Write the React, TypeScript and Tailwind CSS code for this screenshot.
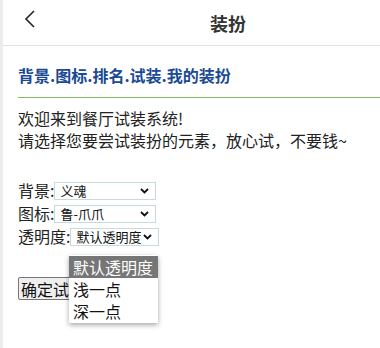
import React from "react";

const font = { fontFamily: '"Noto Sans CJK SC", "Noto Sans", sans-serif' };

function Sel({ value, width }: { value: string; width: string }) {
  return (
    <div className={`relative inline-flex items-center h-[18px] ${width} border border-[#c6dcdc] bg-white align-middle`}>
      <span className="pl-[5px] text-[13px] leading-[16px] text-[#111]">{value}</span>
      <svg className="absolute right-[6px] top-[5px]" width="9" height="6" viewBox="0 0 9 6">
        <path d="M1 1 L4.5 4.5 L8 1" stroke="#111" strokeWidth="1.8" fill="none" />
      </svg>
    </div>
  );
}

export default function App() {
  return (
    <div className="w-[380px] h-[348px] bg-white flex overflow-hidden" style={font}>
      <div className="w-[3px] bg-[#ececec] shrink-0" />
      <div className="flex-1 flex flex-col">
        <div className="h-[46px] border-b border-[#e3e3e3] flex items-center relative shrink-0">
          <svg className="absolute left-[21px] top-[10px]" width="12" height="18" viewBox="0 0 12 18">
            <path d="M10 1 L2 9 L10 17" stroke="#222" strokeWidth="1.6" fill="none" />
          </svg>
          <div className="ml-[207px] text-[18px] font-bold text-[#333] leading-[22px]">装扮</div>
        </div>
        <div className="pl-[15px] pt-[17px]">
          <div className="text-[16px] font-bold text-[#1a4a94] leading-[24px]">背景.图标.排名.试装.我的装扮</div>
          <div className="h-[1px] bg-[#7fbf5f] mt-[10px]" />
          <div className="mt-[9px] text-[16px] leading-[22px] text-[#222]">
            <div>欢迎来到餐厅试装系统!</div>
            <div>请选择您要尝试装扮的元素，放心试，不要钱~</div>
          </div>
          <div className="mt-[28px] text-[16px] leading-[23px] text-[#222] flex flex-col relative">
            <div className="flex items-center">背景:<Sel value="义魂" width="w-[102px]" /></div>
            <div className="flex items-center">图标:<Sel value="鲁-爪爪" width="w-[102px]" /></div>
            <div className="flex items-center">透明度:<Sel value="默认透明度" width="w-[89px]" /></div>
            <div className="mt-[29px]">
              <button className="h-[23px] px-[2px] border border-[#767676] rounded-[2px] bg-[#efefef] text-[16px] leading-[20px] text-[#111]">确定试装</button>
            </div>
            <div className="absolute left-[51px] top-[76px] w-[89px] bg-white shadow-[0_2px_5px_rgba(0,0,0,0.35)] text-[16px] leading-[22px] text-[#111] py-[1px]">
              <div className="bg-[#767676] text-white pl-[4px]">默认透明度</div>
              <div className="pl-[4px]">浅一点</div>
              <div className="pl-[4px]">深一点</div>
            </div>
          </div>
        </div>
      </div>
    </div>
  );
}
